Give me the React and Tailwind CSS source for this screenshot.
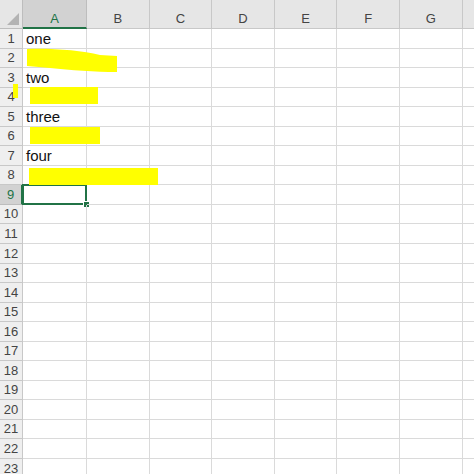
import React from 'react';

const COLS = ['A', 'B', 'C', 'D', 'E', 'F', 'G', ''];
const ROWS = Array.from({ length: 23 }, (_, i) => i + 1);
const VALUES = { 1: 'one', 3: 'two', 5: 'three', 7: 'four' };
const SELECTED_ROW = 9;

// yellow marker strokes drawn over the sheet
const Highlights = () => (
  <svg className="absolute inset-0 pointer-events-none" width="474" height="474" viewBox="0 0 474 474">
    <g fill="#ffff00">
      <path d="M27 49 C50 48 80 50 100 55 L117 56 L117 72 C95 72 70 70 50 68 L27 66 Z" />
      <rect x="30" y="87" width="68" height="17" />
      <rect x="13" y="84" width="5" height="14" />
      <rect x="30" y="127" width="70" height="17" />
      <rect x="29" y="168" width="129" height="17" />
    </g>
  </svg>
);

export default function App() {
  return (
    <div className="relative w-[474px] h-[474px] overflow-hidden bg-white font-['Liberation_Sans',Arial,sans-serif]">
      <div className="grid grid-cols-[23px_64px_repeat(7,62.6px)] w-max">
        {/* header row */}
        <div className="relative h-[29px] bg-[#e6e6e6] border-r border-b border-[#bdbdbd]">
          <div className="absolute right-[3px] bottom-[3px] w-0 h-0 border-l-[12px] border-l-transparent border-b-[12px] border-b-[#b3b3b3]" />
        </div>
        {COLS.map((c, i) => (
          <div
            key={i}
            className={
              c === 'A'
                ? 'h-[29px] pt-[12px] text-center leading-[13px] text-[13px] text-[#217346] bg-[#d2d2d2] border-r border-[#bdbdbd] border-b-2 border-b-[#217346]'
                : 'h-[29px] pt-[12px] text-center leading-[13px] text-[13px] text-[#444] bg-[#e6e6e6] border-r border-b border-[#c8c8c8]'
            }
          >
            {c}
          </div>
        ))}

        {ROWS.map((r) => (
          <React.Fragment key={r}>
            <div
              className={
                r === SELECTED_ROW
                  ? 'h-[19.55px] flex items-center justify-center text-[13px] text-[#217346] bg-[#d2d2d2] border-r-2 border-r-[#217346] border-b border-b-[#bdbdbd]'
                  : 'h-[19.55px] flex items-center justify-center text-[13px] text-[#444] bg-[#efefef] border-r border-b border-[#c8c8c8]'
              }
            >
              {r}
            </div>
            {COLS.map((c, i) => (
              <div
                key={i}
                className="relative h-[19.55px] border-r border-b border-[#dadada] text-[15px] text-[#111] leading-[20px] pl-[3px] whitespace-nowrap"
              >
                {c === 'A' ? VALUES[r] : null}
                {c === 'A' && r === SELECTED_ROW && (
                  <div className="absolute -left-px -top-px w-[65px] h-[21px] border-2 border-[#217346]">
                    <div className="absolute -right-[5px] -bottom-[5px] w-[7px] h-[7px] bg-[#217346] border border-white" />
                  </div>
                )}
              </div>
            ))}
          </React.Fragment>
        ))}
      </div>
      <Highlights />
    </div>
  );
}
